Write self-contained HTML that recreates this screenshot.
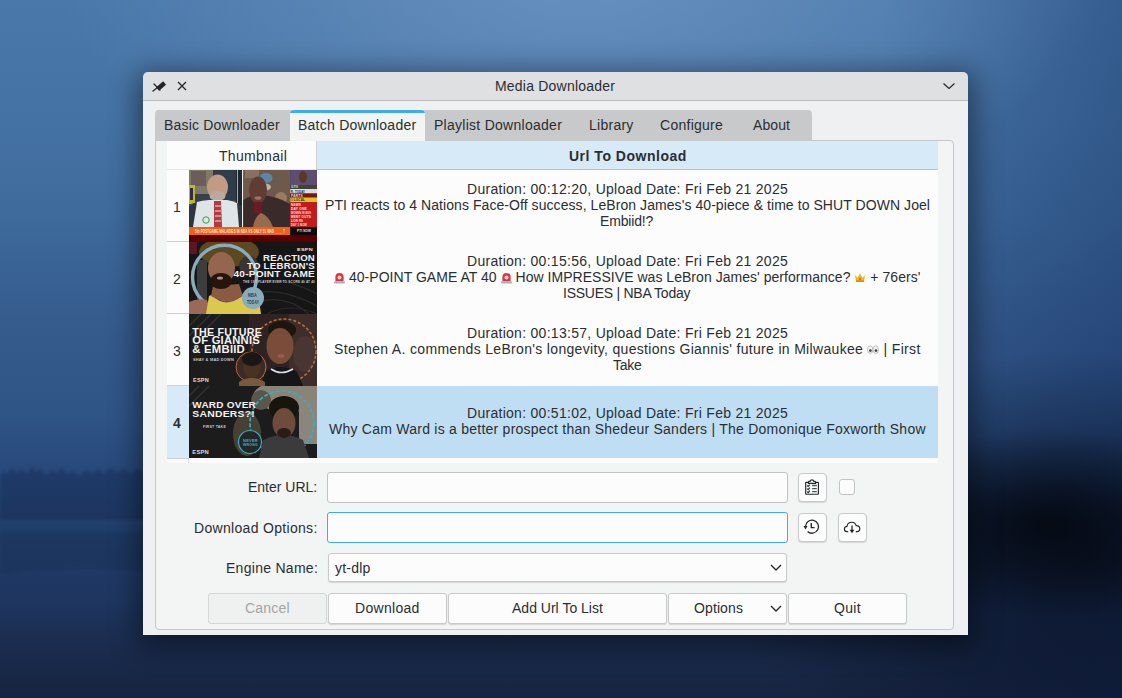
<!DOCTYPE html>
<html><head><meta charset="utf-8">
<style>
*{box-sizing:border-box;margin:0;padding:0}
html,body{width:1122px;height:698px;overflow:hidden}
body{position:relative;font-family:"Liberation Sans",sans-serif;font-size:14px;color:#2a2e32;letter-spacing:0.2px;line-height:16px}
.a{position:absolute}
.nw{white-space:nowrap}
#bg{left:0;top:0;width:1122px;height:698px;
 background:
  radial-gradient(ellipse 190px 95px at 1050px 525px, rgba(4,8,16,0.9), rgba(4,8,16,0) 100%),
  radial-gradient(ellipse 380px 210px at 1090px 560px, rgba(6,10,22,0.75), rgba(6,10,22,0) 100%),
  radial-gradient(ellipse 520px 240px at 580px -20px, rgba(112,152,198,0.75), rgba(112,152,198,0) 100%),
  linear-gradient(90deg, rgba(0,0,0,0) 0px, rgba(0,0,0,0) 880px, rgba(8,30,80,0.3) 1122px),
  linear-gradient(180deg,#4a78aa 0px,#4572a4 120px,#3e699b 220px,#34598b 340px,#2e5385 420px,#28497b 470px,#223f6c 520px,#1e3660 600px,#1a2b4c 650px,#172440 698px);
}
#shadow{left:143px;top:72px;width:825px;height:563px;border-radius:5px 5px 0 0;box-shadow:0 6px 28px 6px rgba(0,0,0,0.45)}
#title{left:143px;top:72px;width:825px;height:28px;background:#dfe0e2;border-radius:5px 5px 0 0}
#tsep{left:143px;top:100px;width:825px;height:1px;background:#bdbec0}
#body{left:143px;top:101px;width:825px;height:534px;background:#eff0f2}
#tabbar{left:155px;top:110px;width:657px;height:31px;background:#c8c9cb;border-radius:4px 4px 0 0}
#panel{left:155px;top:140px;width:799px;height:490px;background:#f3f4f4;border:1px solid #c6c7c9;border-radius:0 4px 4px 4px}
#seltab{left:290px;top:110px;width:135px;height:31px;background:#f3f4f4;border-radius:4px 4px 0 0;overflow:hidden}
#seltab:before{content:"";position:absolute;left:0;top:0;width:135px;height:3px;background:#3daee9}
.tab{top:117px;height:16px}
#table{left:167px;top:141px;width:771px;height:322px;background:#fcfcfc}
#uhdr{left:317px;top:141px;width:621px;height:29px;background:#d6eaf7;border-bottom:1px solid #a9c6d9}
.vsep{left:167px;width:22px;height:1px;background:#cfd0d1}
.rn{left:167px;width:22px;text-align:center}
.cell{left:317px;width:621px;text-align:center}
.thumb{left:189px;width:128px;height:72px;overflow:hidden;background:#111}
.inp{background:#fcfcfc;border:1px solid #c2c3c5;border-radius:3px}
.btn{background:#fcfcfc;border:1px solid #c8c9cb;border-radius:3px;box-shadow:0 1px 1px rgba(0,0,0,0.13);text-align:center;line-height:28px}
.lbl{text-align:right;width:200px;left:117px}
</style></head>
<body>
<div id="bg" class="a"></div>
<svg class="a" style="left:0;top:440px" width="160" height="150" viewBox="0 0 160 150"><defs><filter id="fb" x="-10%" y="-50%" width="120%" height="200%"><feGaussianBlur stdDeviation="1.8"/></filter></defs>
<path d="M0 36 L4 31 L8 34 L12 27 L16 33 L22 29 L27 34 L32 26 L36 31 L41 29 L46 35 L52 30 L57 33 L62 28 L67 34 L73 31 L79 36 L86 30 L92 33 L98 29 L104 34 L110 27 L116 32 L124 29 L131 34 L138 28 L146 33 L160 30 L160 82 L0 82 Z" fill="#152b52" opacity="0.45" filter="url(#fb)"/>
<path d="M0 92 L160 92 L160 132 Q80 124 0 134Z" fill="#142a50" opacity="0.3" filter="url(#fb)"/><rect x="0" y="80" width="160" height="3" fill="#3a5a8a" opacity="0.25" filter="url(#fb)"/>
</svg>
<div id="shadow" class="a"></div>
<div id="title" class="a"></div>
<div id="tsep" class="a"></div>
<div id="body" class="a"></div>

<!-- title bar content -->
<svg class="a" style="left:150px;top:77px" width="18" height="18" viewBox="0 0 18 18">
 <path d="M14.6 6.0 L7.6 12.0" stroke="#232629" stroke-width="4.4" stroke-linecap="butt"/>
 <path d="M4.0 7.0 L10.0 13.0 M7.2 10.8 L3.0 14.0" stroke="#232629" stroke-width="1.3" stroke-linecap="round"/>
</svg>
<svg class="a" style="left:176px;top:80px" width="12" height="12" viewBox="0 0 12 12">
 <path d="M2 2 L10 10 M10 2 L2 10" stroke="#232629" stroke-width="1.25"/>
</svg>
<svg class="a" style="left:942px;top:82px" width="14" height="8" viewBox="0 0 14 8">
 <path d="M1.5 1.5 L7 6.5 L12.5 1.5" stroke="#232629" stroke-width="1.2" fill="none"/>
</svg>

<!-- tabs -->
<div id="panel" class="a"></div>
<div id="tabbar" class="a"></div>
<div id="seltab" class="a"></div>

<!-- table -->
<div id="table" class="a"></div>
<div id="uhdr" class="a"></div>
<div class="a" style="left:167px;top:169px;width:149px;height:1px;background:#e6e7e8"></div>
<div class="a" style="left:316px;top:141px;width:1px;height:29px;background:#cfd0d1"></div>
<div class="a" style="left:188px;top:459px;width:1px;height:4px;background:#dcdcdc"></div>

<div class="a" style="left:317px;top:386px;width:621px;height:72px;background:#c0def3"></div>
<div class="a" style="left:167px;top:386px;width:22px;height:72px;background:#d6eaf7"></div>
<div class="a vsep" style="top:241px"></div>
<div class="a vsep" style="top:313px"></div>
<div class="a vsep" style="top:385px"></div>
<div class="a vsep" style="top:458px"></div>

<div class="a thumb" style="top:170px" id="t1"><svg width="128" height="72" viewBox="0 0 128 72"><defs><filter id="B1"><feGaussianBlur stdDeviation="0.5"/></filter></defs><g filter="url(#B1)"><rect width="128" height="72" fill="#3a3c3e"/><rect x="0" y="0" width="53" height="57" fill="#34434c"/><rect x="0" y="0" width="24" height="24" fill="#7d7a66"/><rect x="2" y="1" width="15" height="15" fill="#6e5c5c"/><rect x="24" y="0" width="23" height="30" fill="#2e3c48"/><rect x="47" y="0" width="6" height="57" fill="#1f272e"/><rect x="48" y="0" width="1" height="57" fill="#a8acb0"/><rect x="0" y="15" width="6" height="19" fill="#c2b334"/><rect x="1" y="18" width="3" height="12" fill="#2a3036"/><ellipse cx="28.5" cy="17" rx="10.5" ry="12.5" fill="#c29a86"/><ellipse cx="28.5" cy="26" rx="8" ry="5" fill="#b8aaa0"/><path d="M0 57 L0 36 Q6 31 20 30 L38 30 Q50 32 53 38 L53 57 Z" fill="#dfe4e8"/><path d="M0 36 Q3 33 8 32 L4 57 L0 57Z" fill="#2e363c"/><path d="M53 36 L48 33 L50 57 L53 57Z" fill="#2e363c"/><path d="M25 31 L32 31 L33 57 L25 57Z" fill="#b03a40"/><path d="M26 36 L32 36 M26 41 L32 41 M26 46 L32 46 M26 51 L32 51" stroke="#e8e0e0" stroke-width="1.2"/><circle cx="17" cy="50" r="3.2" fill="none" stroke="#38a040" stroke-width="1"/><rect x="53" y="0" width="1.3" height="57" fill="#f0f0f0"/><rect x="54.3" y="0" width="47" height="57" fill="#6e5a4e"/><rect x="56" y="0" width="14" height="8" fill="#8a7060"/><ellipse cx="77" cy="8" rx="6.5" ry="5" fill="#5a86aa"/><ellipse cx="76" cy="17" rx="6" ry="3.5" fill="#b8b8a8"/><ellipse cx="92" cy="28" rx="6" ry="6" fill="#9a7a62"/><path d="M54.3 57 L54.3 30 Q62 25 72 25 Q88 26 101 34 L101 57Z" fill="#3a2c2c"/><ellipse cx="69" cy="20" rx="9" ry="13.5" fill="#5e3e32"/><ellipse cx="69" cy="28" rx="3.5" ry="1.8" fill="#a86a60"/><rect x="65" y="32" width="8" height="12" fill="#6a1c24"/><path d="M64 57 Q66 46 72 43 Q80 46 84 57Z" fill="#9a6a50"/><rect x="101.3" y="0" width="26.7" height="15" fill="#5e4e70"/><ellipse cx="114" cy="7" rx="4" ry="6" fill="#5a3828"/><rect x="101.3" y="15" width="26.7" height="4" fill="#3c4438"/><rect x="101.3" y="19" width="26.7" height="4.5" fill="#dcdcdc"/><rect x="101.3" y="23.5" width="26.7" height="4" fill="#7a1414"/><rect x="101.3" y="27.5" width="26.7" height="4.5" fill="#dcc32a"/><rect x="101.3" y="32" width="26.7" height="25" fill="#c41e1e"/><rect x="0" y="57" width="101.3" height="8" fill="#ec6414"/><rect x="101.3" y="57" width="26.7" height="8" fill="#0c0c0c"/><rect x="0" y="65" width="128" height="7" fill="#580606"/></g><text x="102" y="18.4" font-family="Liberation Sans" font-weight="bold" font-size="3.6" textLength="7" lengthAdjust="spacingAndGlyphs" fill="#e0e0e0" >GTII</text><text x="102" y="22.8" font-family="Liberation Sans" font-weight="bold" font-size="4" textLength="14" lengthAdjust="spacingAndGlyphs" fill="#202020" >R. TODAY</text><text x="102" y="26.8" font-family="Liberation Sans" font-weight="bold" font-size="3.6" textLength="12" lengthAdjust="spacingAndGlyphs" fill="#f0d0d0" >PARTS</text><text x="102" y="31.2" font-family="Liberation Sans" font-weight="bold" font-size="3.6" textLength="14" lengthAdjust="spacingAndGlyphs" fill="#202020" >1  LOCAL</text><text x="102" y="35.6" font-family="Liberation Sans" font-weight="bold" font-size="3.6" textLength="10" lengthAdjust="spacingAndGlyphs" fill="#f4e4e4" >NEWS</text><text x="102" y="40" font-family="Liberation Sans" font-weight="bold" font-size="3.6" textLength="16" lengthAdjust="spacingAndGlyphs" fill="#f4e4e4" >DAY ONE</text><text x="102" y="44" font-family="Liberation Sans" font-weight="bold" font-size="3.6" textLength="20" lengthAdjust="spacingAndGlyphs" fill="#f4e4e4" >WOMEN IN BUS</text><text x="102" y="48" font-family="Liberation Sans" font-weight="bold" font-size="3.6" textLength="20" lengthAdjust="spacingAndGlyphs" fill="#f4e4e4" >MENT OUTS</text><text x="102" y="52" font-family="Liberation Sans" font-weight="bold" font-size="3.6" textLength="12" lengthAdjust="spacingAndGlyphs" fill="#f4e4e4" >LION RS</text><text x="102" y="56" font-family="Liberation Sans" font-weight="bold" font-size="3.6" textLength="16" lengthAdjust="spacingAndGlyphs" fill="#f4e4e4" >DAY 1 NOW</text><text x="6" y="63.2" font-family="Liberation Sans" font-weight="bold" font-size="5" textLength="90" lengthAdjust="spacingAndGlyphs" fill="#fbe8d8" >5th POSTGAME MALADIES IN NBA VS ONLY 51 WAS ____ ?</text><text x="108" y="62.4" font-family="Liberation Sans" font-weight="bold" font-size="3.6" textLength="14" lengthAdjust="spacingAndGlyphs" fill="#f0e0e0" >PTI NOW</text></svg></div>
<div class="a thumb" style="top:242px" id="t2"><svg width="128" height="72" viewBox="0 0 128 72"><defs><filter id="B2"><feGaussianBlur stdDeviation="0.5"/></filter></defs><g filter="url(#B2)"><rect width="128" height="72" fill="#161616"/><rect x="0" y="0" width="8" height="12" fill="#5a1820"/><ellipse cx="40" cy="10" rx="30" ry="15" fill="#5c4820"/><ellipse cx="60" cy="24" rx="10" ry="10" fill="#3a3030"/><path d="M64 42 Q90 32 128 52 M62 52 Q90 44 128 64 M78 72 Q100 60 128 72 M70 60 Q96 52 120 72" stroke="#2c2c2c" stroke-width="1.2" fill="none"/><rect x="8" y="18" width="10" height="40" fill="#3c3c3c"/><circle cx="35.5" cy="35.3" r="32" fill="none" stroke="#88acbc" stroke-width="3.4"/><path d="M0 72 L0 60 Q8 56 18 58 L22 72Z" fill="#9a6a58"/><path d="M17 72 L20 54 Q36 46 52 52 L70 58 L72 72Z" fill="#dcc84e"/><path d="M24 53 Q36 66 52 54" stroke="#6a4a98" stroke-width="1.5" fill="none"/><path d="M24 44 L50 42 L54 54 Q38 64 22 54 Z" fill="#8a5a42"/><ellipse cx="32.5" cy="26" rx="13.5" ry="16" fill="#946650"/><ellipse cx="32" cy="39" rx="11" ry="8" fill="#241610"/><ellipse cx="31" cy="36" rx="3" ry="1.6" fill="#c08a80"/><circle cx="64" cy="56" r="11" fill="#88acbc"/></g><text x="59" y="55" font-family="Liberation Sans" font-weight="bold" font-size="5" textLength="9" lengthAdjust="spacingAndGlyphs" fill="#303838" >NBA</text><text x="58" y="62" font-family="Liberation Sans" font-weight="bold" font-size="6" textLength="12" lengthAdjust="spacingAndGlyphs" fill="#303838" >TODAY</text><text x="108" y="9.2" font-family="Liberation Sans" font-weight="bold" font-size="4" textLength="16" lengthAdjust="spacingAndGlyphs" fill="#e8e8e8" >ESPN</text><text x="74" y="18.6" font-family="Liberation Sans" font-weight="bold" font-size="8.6" textLength="52" lengthAdjust="spacingAndGlyphs" fill="#f2f2f2" >REACTION</text><text x="58" y="27" font-family="Liberation Sans" font-weight="bold" font-size="8.6" textLength="68" lengthAdjust="spacingAndGlyphs" fill="#f2f2f2" >TO LEBRON'S</text><text x="44.5" y="34.6" font-family="Liberation Sans" font-weight="bold" font-size="8.6" textLength="81.5" lengthAdjust="spacingAndGlyphs" fill="#f2f2f2" >40-POINT GAME</text><text x="54" y="41" font-family="Liberation Sans" font-weight="bold" font-size="3.6" textLength="72" lengthAdjust="spacingAndGlyphs" fill="#c8c8c8" >THE 1ST PLAYER EVER TO SCORE 40 AT 40</text></svg></div>
<div class="a thumb" style="top:314px" id="t3"><svg width="128" height="72" viewBox="0 0 128 72"><defs><filter id="B3"><feGaussianBlur stdDeviation="0.5"/></filter></defs><g filter="url(#B3)"><rect width="128" height="72" fill="#1a1a1a"/><path d="M0 12 L12 0 M0 22 L22 0 M6 26 L32 0" stroke="#333" stroke-width="1.5"/><rect x="60" y="0" width="68" height="72" fill="#2e2422"/><rect x="100" y="0" width="28" height="72" fill="#3e2e2a"/><ellipse cx="116" cy="40" rx="12" ry="18" fill="#4a3430"/><circle cx="95" cy="37" r="32" fill="none" stroke="#b8683a" stroke-width="1.6" stroke-dasharray="3 2"/><ellipse cx="93" cy="16" rx="14" ry="9" fill="#1c1410"/><ellipse cx="91" cy="32" rx="13.5" ry="18" fill="#7a4e3a"/><ellipse cx="92" cy="42" rx="3.5" ry="1.8" fill="#a05a50"/><path d="M72 72 L76 58 Q92 48 108 58 L114 72Z" fill="#141414"/><path d="M82 55 Q92 62 104 55" stroke="#d8e0e8" stroke-width="1.6" fill="none"/><circle cx="62" cy="53" r="15" fill="#3a2c26" stroke="#b8683a" stroke-width="1"/><ellipse cx="63" cy="53" rx="9" ry="11" fill="#4a3024"/><ellipse cx="63" cy="45" rx="10" ry="7" fill="#1c1612"/><path d="M50 68 Q62 60 76 68 L76 72 L50 72Z" fill="#7a5a3c"/></g><text x="3.3" y="21.6" font-family="Liberation Sans" font-weight="bold" font-size="10.8" textLength="69.7" lengthAdjust="spacingAndGlyphs" fill="#f2f2f2" >THE FUTURE</text><text x="3.3" y="30" font-family="Liberation Sans" font-weight="bold" font-size="10.8" textLength="67.7" lengthAdjust="spacingAndGlyphs" fill="#f2f2f2" >OF GIANNIS</text><text x="3.3" y="38.5" font-family="Liberation Sans" font-weight="bold" font-size="10.8" textLength="52.7" lengthAdjust="spacingAndGlyphs" fill="#f2f2f2" >&amp; EMBIID</text><text x="4" y="46.5" font-family="Liberation Sans" font-weight="bold" font-size="3.6" textLength="41" lengthAdjust="spacingAndGlyphs" fill="#c8c8c8" >SHAY &amp; MAD DOWN</text><text x="4" y="68.4" font-family="Liberation Sans" font-weight="bold" font-size="4.6" textLength="16" lengthAdjust="spacingAndGlyphs" fill="#dddddd" >ESPN</text></svg></div>
<div class="a thumb" style="top:386px" id="t4"><svg width="128" height="72" viewBox="0 0 128 72"><defs><filter id="B4"><feGaussianBlur stdDeviation="0.6"/></filter></defs><g filter="url(#B4)"><rect width="128" height="72" fill="#1c1c1c"/><path d="M0 10 L10 0 M0 20 L20 0" stroke="#333" stroke-width="1.5"/><ellipse cx="100" cy="10" rx="36" ry="16" fill="#8a8478"/><ellipse cx="72" cy="14" rx="10" ry="10" fill="#5a564c"/><rect x="110" y="14" width="18" height="44" fill="#8a867e"/><ellipse cx="58" cy="48" rx="14" ry="22" fill="#4a4034"/><circle cx="93" cy="37" r="32" fill="none" stroke="#2ab4c4" stroke-width="1.6" stroke-dasharray="4 2"/><path d="M70 72 L74 54 Q94 44 114 54 L120 72Z" fill="#3a3a3a"/><ellipse cx="95" cy="22" rx="15" ry="12" fill="#181410"/><ellipse cx="95" cy="37" rx="11.5" ry="15" fill="#6e4c3a"/><ellipse cx="95" cy="47" rx="7" ry="5" fill="#2a1c16"/><circle cx="61" cy="56" r="11.5" fill="#262626" stroke="#2ab4c4" stroke-width="1.2"/></g><text x="54" y="56" font-family="Liberation Sans" font-weight="bold" font-size="4" textLength="15" lengthAdjust="spacingAndGlyphs" fill="#2ab4c4" >NEVER</text><text x="54" y="60" font-family="Liberation Sans" font-weight="bold" font-size="4" textLength="15" lengthAdjust="spacingAndGlyphs" fill="#2ab4c4" >WRONG</text><text x="3.3" y="22.2" font-family="Liberation Sans" font-weight="bold" font-size="8.4" textLength="63.7" lengthAdjust="spacingAndGlyphs" fill="#f2f2f2" >WARD OVER</text><text x="3.3" y="31.2" font-family="Liberation Sans" font-weight="bold" font-size="9" textLength="62.7" lengthAdjust="spacingAndGlyphs" fill="#f2f2f2" >SANDERS?!</text><text x="14" y="42" font-family="Liberation Sans" font-weight="bold" font-size="3.6" textLength="23" lengthAdjust="spacingAndGlyphs" fill="#c8c8c8" >FIRST TAKE</text><text x="3.3" y="68.4" font-family="Liberation Sans" font-weight="bold" font-size="4.6" textLength="16.7" lengthAdjust="spacingAndGlyphs" fill="#dddddd" >ESPN</text></svg></div>


<!-- form -->
<div class="a inp" style="left:327px;top:472px;width:461px;height:31px"></div>
<div class="a inp" style="left:327px;top:512px;width:461px;height:31px;border-color:#3daee9"></div>
<div class="a btn" style="left:328px;top:553px;width:459px;height:29px"></div>
<svg class="a" style="left:770px;top:563px" width="12" height="9" viewBox="0 0 12 9">
 <path d="M1 2 L6 7 L11 2" stroke="#232629" stroke-width="1.3" fill="none"/>
</svg>

<div class="a btn" style="left:798px;top:473px;width:29px;height:29px;border-radius:4px"></div>
<div class="a" style="left:839px;top:479px;width:16px;height:16px;background:#fcfcfc;border:1px solid #c2c3c5;border-radius:3px"></div>
<div class="a btn" style="left:798px;top:513px;width:29px;height:29px;border-radius:4px"></div>
<div class="a btn" style="left:838px;top:513px;width:29px;height:29px;border-radius:4px"></div>


<svg class="a" style="left:804px;top:477px" width="16" height="19" viewBox="0 0 16 19">
 <path d="M4.4 5.4 L2.2 5.4 Q1.7 5.4 1.7 5.9 L1.7 16.7 Q1.7 17.2 2.2 17.2 L13.9 17.2 Q14.4 17.2 14.4 16.7 L14.4 5.9 Q14.4 5.4 13.9 5.4 L11.6 5.4" stroke="#232629" stroke-width="1.15" fill="none"/>
 <path d="M4.4 6.4 L4.4 5.2 Q4.4 4.3 5.4 4.3 L6.1 4.3 A2 2 0 0 1 9.9 4.3 L10.6 4.3 Q11.6 4.3 11.6 5.2 L11.6 6.4 Z" stroke="#232629" stroke-width="1.15" fill="none"/>
 <path d="M3.1 8.5 L4.2 9.5 L5.9 7.6 M3.1 11.6 L4.2 12.6 L5.9 10.7 M3.1 14.6 L4.2 15.6 L5.9 13.7" stroke="#232629" stroke-width="1.1" fill="none"/>
 <path d="M8.1 8.5 H12.8 M8.1 11.6 H12.8 M8.1 14.6 H12.8" stroke="#505356" stroke-width="1.4"/>
</svg>
<svg class="a" style="left:803px;top:518px" width="18" height="18" viewBox="0 0 18 18">
 <path d="M2.5 8.7 A6.5 6.5 0 1 1 4.6 13.5" stroke="#232629" stroke-width="1.3" fill="none"/>
 <path d="M0.5 7.9 L4.5 7.9 L2.5 11.4 Z" fill="#232629"/>
 <path d="M8.3 5.0 V9.6 H11.6" stroke="#232629" stroke-width="1.4" fill="none"/>
</svg>
<svg class="a" style="left:843px;top:519px" width="19" height="16" viewBox="0 0 19 16">
 <path d="M5.2 12.6 L4.2 12.6 Q1.4 12.6 1.4 10.0 Q1.4 7.6 4.0 7.4 Q4.4 3.2 8.8 3.2 Q12.4 3.2 13.2 6.6 Q16.8 6.8 16.8 9.8 Q16.8 12.6 14.0 12.6 L12.8 12.6" stroke="#232629" stroke-width="1.15" fill="none"/>
 <path d="M9.0 6.6 V12.8" stroke="#232629" stroke-width="1.3"/>
 <path d="M6.6 10.8 L9.0 14.2 L11.4 10.8 Z" fill="#232629"/>
</svg>
<!-- buttons -->
<div class="a btn nw" style="left:208px;top:593px;width:119px;height:31px;background:#eff0f0;border-color:#d5d6d7;color:#a4a5a7;box-shadow:none"></div>
<div class="a btn nw" style="left:328px;top:593px;width:119px;height:31px"></div>
<div class="a btn nw" style="left:448px;top:593px;width:219px;height:31px"></div>
<div class="a btn nw" style="left:668px;top:593px;width:119px;height:31px"></div>
<svg class="a" style="left:770px;top:604px" width="12" height="9" viewBox="0 0 12 9">
 <path d="M1 2 L6 7 L11 2" stroke="#232629" stroke-width="1.3" fill="none"/>
</svg>
<div class="a btn nw" style="left:788px;top:593px;width:119px;height:31px"></div>
<div class="a nw" id="ttl" style="left:495.00px;top:78.00px;letter-spacing:0.212px;">Media Downloader</div>
<div class="a nw" id="tb1" style="left:164.00px;top:117.40px;letter-spacing:0.182px;">Basic Downloader</div>
<div class="a nw" id="tb2" style="left:298.00px;top:117.40px;letter-spacing:0.248px;">Batch Downloader</div>
<div class="a nw" id="tb3" style="left:434.00px;top:117.40px;letter-spacing:0.270px;">Playlist Downloader</div>
<div class="a nw" id="tb4" style="left:589.00px;top:117.40px;letter-spacing:0.260px;">Library</div>
<div class="a nw" id="tb5" style="left:660.00px;top:117.40px;letter-spacing:0.267px;">Configure</div>
<div class="a nw" id="tb6" style="left:753.00px;top:117.40px;letter-spacing:0.088px;">About</div>
<div class="a nw" id="hd1" style="left:219.00px;top:148.30px;letter-spacing:0.301px;">Thumbnail</div>
<div class="a nw" id="hd2" style="left:569.00px;top:148.30px;letter-spacing:0.509px;font-weight:bold">Url To Download</div>
<div class="a nw" id="n1" style="left:173.00px;top:198.50px;letter-spacing:0.000px;">1</div>
<div class="a nw" id="n2" style="left:173.00px;top:270.50px;letter-spacing:0.000px;">2</div>
<div class="a nw" id="n3" style="left:173.00px;top:342.50px;letter-spacing:0.000px;">3</div>
<div class="a nw" id="n4" style="left:173.00px;top:414.50px;letter-spacing:0.000px;font-weight:bold">4</div>
<div class="a nw" id="r1a" style="left:467.00px;top:181.40px;letter-spacing:0.284px;">Duration: 00:12:20, Upload Date: Fri Feb 21 2025</div>
<div class="a nw" id="r1b" style="left:325.00px;top:197.40px;letter-spacing:0.068px;">PTI reacts to 4 Nations Face-Off success, LeBron James's 40-piece &amp; time to SHUT DOWN Joel</div>
<div class="a nw" id="r1c" style="left:600.00px;top:213.40px;letter-spacing:-0.173px;">Embiid!?</div>
<div class="a nw" id="r2a" style="left:467.00px;top:253.40px;letter-spacing:0.284px;">Duration: 00:15:56, Upload Date: Fri Feb 21 2025</div>
<div class="a nw" id="r2b" style="left:334.00px;top:269.40px;letter-spacing:0.036px;"><svg width="11" height="12" viewBox="0 0 11 12" style="vertical-align:-2px"><path d="M1.4 9.2 L1.4 5.2 Q1.4 0.9 5.5 0.9 Q9.6 0.9 9.6 5.2 L9.6 9.2 Z" fill="#e0323a"/><ellipse cx="5.5" cy="5.4" rx="2" ry="2" fill="#ffd6d6"/><rect x="0" y="9.2" width="11" height="2.4" rx="1" fill="#9fb2c0"/></svg> 40-POINT GAME AT 40 <svg width="11" height="12" viewBox="0 0 11 12" style="vertical-align:-2px"><path d="M1.4 9.2 L1.4 5.2 Q1.4 0.9 5.5 0.9 Q9.6 0.9 9.6 5.2 L9.6 9.2 Z" fill="#e0323a"/><ellipse cx="5.5" cy="5.4" rx="2" ry="2" fill="#ffd6d6"/><rect x="0" y="9.2" width="11" height="2.4" rx="1" fill="#9fb2c0"/></svg> How IMPRESSIVE was LeBron James&#39; performance? <svg width="12" height="11" viewBox="0 0 12 11" style="vertical-align:-1px"><path d="M1 3 L3.6 6 L6 1.2 L8.4 6 L11 3 L10 9.6 L2 9.6 Z" fill="#f4b400"/><rect x="2" y="8.4" width="8" height="1.6" fill="#e08a00"/><circle cx="6" cy="7" r="0.9" fill="#2a8fd8"/></svg> + 76ers&#39;</div>
<div class="a nw" id="r2c" style="left:563.00px;top:285.40px;letter-spacing:-0.255px;">ISSUES | NBA Today</div>
<div class="a nw" id="r3a" style="left:467.00px;top:325.40px;letter-spacing:0.284px;">Duration: 00:13:57, Upload Date: Fri Feb 21 2025</div>
<div class="a nw" id="r3b" style="left:334.00px;top:341.40px;letter-spacing:0.324px;">Stephen A. commends LeBron&#39;s longevity, questions Giannis&#39; future in Milwaukee <svg width="12" height="11" viewBox="0 0 12 11" style="vertical-align:-1px"><ellipse cx="3.2" cy="5.6" rx="2.7" ry="3.8" fill="#f4f4f4" stroke="#9a9a9a" stroke-width="0.6"/><ellipse cx="8.8" cy="5.6" rx="2.7" ry="3.8" fill="#f4f4f4" stroke="#9a9a9a" stroke-width="0.6"/><circle cx="3.4" cy="6.6" r="1.3" fill="#3a3a3a"/><circle cx="9" cy="6.6" r="1.3" fill="#3a3a3a"/></svg> | First</div>
<div class="a nw" id="r3c" style="left:613.00px;top:357.40px;letter-spacing:-0.280px;">Take</div>
<div class="a nw" id="r4a" style="left:467.00px;top:404.90px;letter-spacing:0.284px;">Duration: 00:51:02, Upload Date: Fri Feb 21 2025</div>
<div class="a nw" id="r4b" style="left:329.00px;top:420.90px;letter-spacing:0.243px;">Why Cam Ward is a better prospect than Shedeur Sanders | The Domonique Foxworth Show</div>
<div class="a nw" id="l1" style="left:248.00px;top:479.20px;letter-spacing:0.000px;">Enter URL:</div>
<div class="a nw" id="l2" style="left:194.00px;top:519.50px;letter-spacing:0.312px;">Download Options:</div>
<div class="a nw" id="l3" style="left:226.00px;top:559.70px;letter-spacing:0.282px;">Engine Name:</div>
<div class="a nw" id="yt" style="left:335.00px;top:559.70px;letter-spacing:0.200px;">yt-dlp</div>
<div class="a nw" id="b1" style="left:245.00px;top:600.20px;letter-spacing:0.182px;color:#a4a5a7">Cancel</div>
<div class="a nw" id="b2" style="left:355.00px;top:600.20px;letter-spacing:0.303px;">Download</div>
<div class="a nw" id="b3" style="left:512.00px;top:600.20px;letter-spacing:0.007px;">Add Url To List</div>
<div class="a nw" id="b4" style="left:694.00px;top:600.20px;letter-spacing:0.110px;">Options</div>
<div class="a nw" id="b5" style="left:834.00px;top:600.20px;letter-spacing:0.290px;">Quit</div>
</body></html>
